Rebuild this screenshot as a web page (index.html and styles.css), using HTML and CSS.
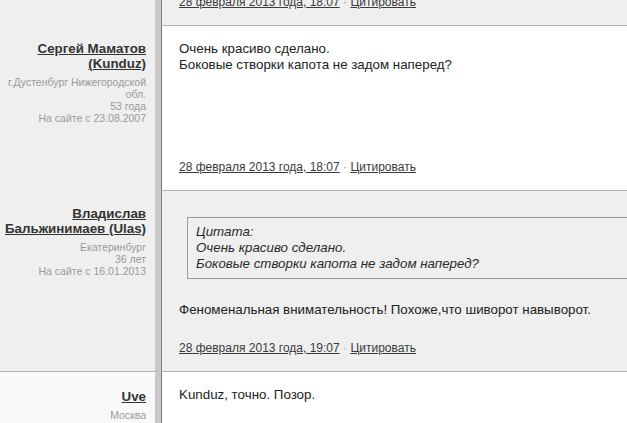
FILE: index.html
```html
<!DOCTYPE html>
<html lang="ru">
<head>
<meta charset="utf-8">
<title>Комментарии</title>
<link rel="stylesheet" href="styles.css">
</head>
<body>
<div class="thread">
  <div class="post post-gray post-cut">
    <div class="author"></div>
    <div class="msg">
      <div class="meta"><a href="#">28 февраля 2013 года, 18:07</a> <span class="dot">·</span> <a href="#">Цитировать</a></div>
    </div>
  </div>

  <div class="post">
    <div class="author">
      <a class="name" href="#">Сергей Маматов (Kunduz)</a>
      <div class="info">г.Дустенбург Нижегородской обл.<br>53 года<br>На сайте с 23.08.2007</div>
    </div>
    <div class="msg">
      <div class="body body-tall">Очень красиво сделано.<br>Боковые створки капота не задом наперед?</div>
      <div class="meta"><a href="#">28 февраля 2013 года, 18:07</a> <span class="dot">·</span> <a href="#">Цитировать</a></div>
    </div>
  </div>

  <div class="post post-gray">
    <div class="author">
      <a class="name" href="#">Владислав Бальжинимаев (Ulas)</a>
      <div class="info">Екатеринбург<br>36 лет<br>На сайте с 16.01.2013</div>
    </div>
    <div class="msg">
      <div class="body">
        <div class="quote">Цитата:<br>Очень красиво сделано.<br>Боковые створки капота не задом наперед?</div>
        <p class="text">Феноменальная внимательность! Похоже,что шиворот навыворот.</p>
      </div>
      <div class="meta"><a href="#">28 февраля 2013 года, 19:07</a> <span class="dot">·</span> <a href="#">Цитировать</a></div>
    </div>
  </div>

  <div class="post post-light">
    <div class="author">
      <a class="name" href="#">Uve</a>
      <div class="info">Москва</div>
    </div>
    <div class="msg">
      <div class="body">Kunduz, точно. Позор.</div>
    </div>
  </div>
</div>
</body>
</html>
```
FILE: styles.css
```css
html, body {
  margin: 0;
  padding: 0;
  overflow: hidden;
  background: #ffffff;
}

body {
  font-family: "Liberation Sans", Arial, sans-serif;
  font-size: 13.33px;
  line-height: 16px;
  color: #222222;
}

.thread {
  width: 780px;
  margin-top: -21px;
}

.post {
  display: flex;
  align-items: stretch;
}

.author {
  width: 144px;
  flex: none;
  padding: 16px 9px 10px 2px;
  background: #efefef;
  border-right: 6px solid #c9c9c9;
  text-align: right;
}

.msg {
  flex: 1;
  padding: 15px 17px 15px 17px;
  background: #ffffff;
  border-left: 1px solid #7d7d7d;
  border-top: 1px solid #b3b3b3;
}

.post-gray .msg {
  background: #efefef;
}

.post-cut .msg {
  border-top: none;
}

.post-light .author {
  background: #f8f9f9;
  border-top: 1px solid #b3b3b3;
  padding-top: 17px;
}

.name {
  display: block;
  font-weight: bold;
  font-size: 13.33px;
  line-height: 15px;
  color: #333333;
  text-decoration: underline;
}

.info {
  margin-top: 5px;
  font-size: 10.5px;
  line-height: 12px;
  color: #9a9a9a;
}

.body-tall {
  min-height: 96px;
}

.quote {
  margin: 11px 0 0 8px;
  padding: 6px 8px 6px 8px;
  border: 1px solid #9a9a9a;
  font-style: italic;
  color: #2a2a2a;
}

.text {
  margin: 23px 0 0 0;
}

.meta {
  margin-top: 22px;
  font-size: 12px;
  line-height: 16px;
  color: #999999;
}

.post-cut .meta {
  margin-top: 0;
}

.meta a {
  color: #3a3a3a;
  text-decoration: underline;
}

.dot {
  color: #999999;
}
```
